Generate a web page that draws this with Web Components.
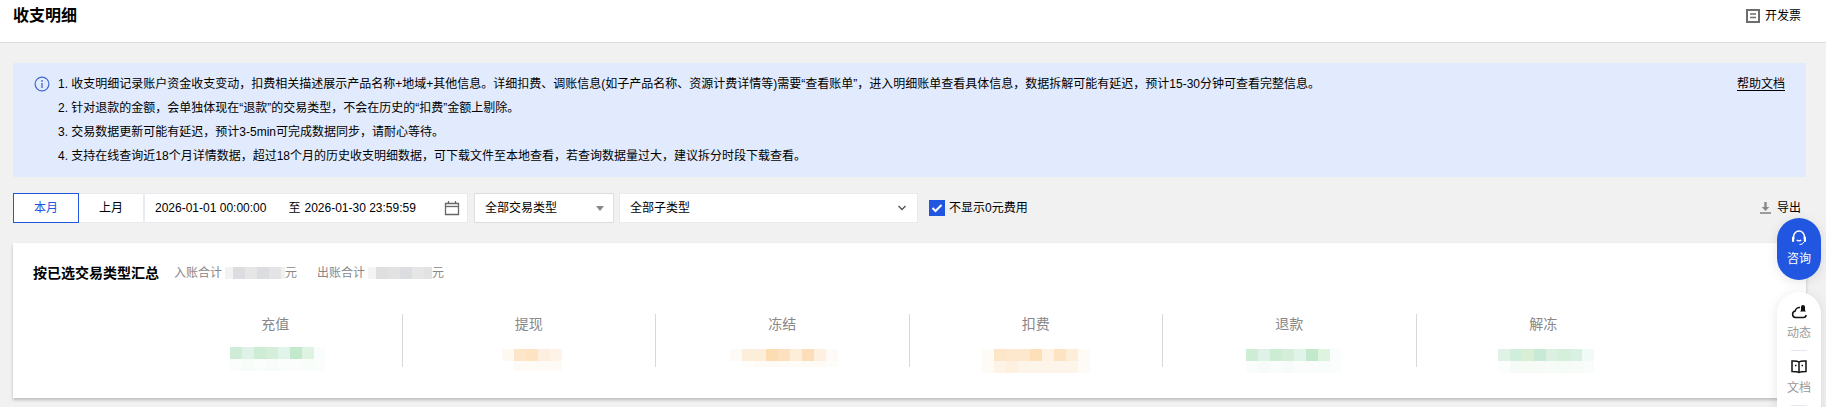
<!DOCTYPE html>
<html lang="zh-CN">
<head>
<meta charset="utf-8">
<title>收支明细</title>
<style>
html,body{margin:0;padding:0;background:#fff;overflow:hidden;height:407px}
body{font:12px/1.5 "Liberation Sans","Noto Sans CJK SC",sans-serif;color:#000}
</style>
</head>
<body>
<bill-page>
  <page-header slot="header" title="收支明细">开发票</page-header>
  <notice-box slot="notice" link="帮助文档">
    <div>1. 收支明细记录账户资金收支变动，扣费相关描述展示产品名称+地域+其他信息。详细扣费、调账信息(如子产品名称、资源计费详情等)需要“查看账单”，进入明细账单查看具体信息，数据拆解可能有延迟，预计15-30分钟可查看完整信息。</div>
    <div>2. 针对退款的金额，会单独体现在“退款”的交易类型，不会在历史的“扣费”金额上剔除。</div>
    <div>3. 交易数据更新可能有延迟，预计3-5min可完成数据同步，请耐心等待。</div>
    <div>4. 支持在线查询近18个月详情数据，超过18个月的历史收支明细数据，可下载文件至本地查看，若查询数据量过大，建议拆分时段下载查看。</div>
  </notice-box>
  <filter-bar slot="filters"></filter-bar>
  <summary-card slot="card">
    <stat-cell label="充值" shift="81" top="13" cells="#cfecd6 #dff2e8 #cdecd4 #d4eed9 #e0f4ea #c3e9cd #dff4e0 #f9fdfb|#fafdfb #f8fcf9 #fbfdfc #f8fcf9 #fafdfc #fafdfc #f9fdfa #fbfdfc"></stat-cell>
    <stat-cell label="提现" shift="99" top="15" cells="#fdf8f2 #fde6c8 #fde3c2 #fcefdf #fdf3e6|#ffffff #fefaf5 #fefaf5 #fefbf7 #fefaf4" h2="10"></stat-cell>
    <stat-cell label="冻结" shift="74" top="15" cells="#fefbf7 #fdeeda #fdeeda #fcdcb3 #fde1bf #fdeeda #fcdfba #fdf0e0 #fefaf5|#ffffff #fffdfb #fefbf7 #fefbf7 #fefbf8 #fefbf8 #fefbf7 #fefbf7 #fefcf9" h2="6"></stat-cell>
    <stat-cell label="扣费" shift="72" top="15" cells="#fefaf5 #fde6c8 #fde8ce #fde8ce #fde0b8 #fdf2e4 #fde3c2 #fdeeda #fefaf5|#fefaf5 #fdf3e6 #fdf0df #fdf5ea #fdf5ea #fdf5ea #fdf5ea #fdf5ea #fefaf5"></stat-cell>
    <stat-cell label="退款" shift="83" top="15" cells="#cfecd6 #dff2e8 #cdecd4 #d4eed9 #e0f4ea #c3e9cd #dff4e0 #f9fdfb|#fafdfb #f8fcf9 #fbfdfc #f8fcf9 #fafdfc #fafdfc #f9fdfa #fbfdfc"></stat-cell>
    <stat-cell label="解冻" shift="81" top="15" last cells="#dff2e6 #d0eedb #d8efd6 #c6ead6 #dcf0e2 #d5f0da #d9f1e3 #f1faf7|#fcfefd #f5fbf7 #f6fbf6 #f6fbf7 #f8fcf9 #f5fbf7 #f8fcf9 #f8fcfa"></stat-cell>
  </summary-card>
  <float-dock slot="dock"></float-dock>
</bill-page>
<script>
function shell(el, html){
  el.attachShadow({mode:"open"}).innerHTML = html;
}
customElements.define("bill-page", class extends HTMLElement{
  constructor(){super();shell(this,`<style>
    :host{display:block;position:relative;width:1826px;height:407px;background:#f1f1f1;overflow:hidden}
    main{display:flex;flex-direction:column;padding:20px 20px 0 13px}
  </style>
  <slot name="header"></slot>
  <main>
    <slot name="notice"></slot>
    <slot name="filters"></slot>
    <slot name="card"></slot>
  </main>
  <slot name="dock"></slot>`);}
});
customElements.define("page-header", class extends HTMLElement{
  constructor(){super();shell(this,`<style>
    :host{display:flex;align-items:center;justify-content:space-between;height:42px;background:#fff;border-bottom:1px solid #ddd;padding:0 25px 0 13px;color:#000}
    h1{margin:0;font-size:16px;font-weight:700;line-height:32px;padding-bottom:10px}
    .act{display:flex;align-items:center;gap:5px;font-size:12px;padding-bottom:10px}
    svg{display:block}
  </style>
  <h1>${this.getAttribute("title")}</h1>
  <div class="act"><svg width="14" height="14" viewBox="0 0 14 14"><rect x="1" y="1" width="12" height="12" fill="none" stroke="#6e6e6e" stroke-width="2"/><path d="M4 5h6M4 8.500h6" stroke="#6e6e6e" stroke-width="1.600"/></svg><slot></slot></div>`);}
});
customElements.define("notice-box", class extends HTMLElement{
  constructor(){super();shell(this,`<style>
    :host{display:flex;box-sizing:border-box;height:114px;padding:9px 21px;background:#e1ebfd;font-size:12px;line-height:24px;color:#000}
    svg{flex:none;display:block;margin:4px 8px 0 0}
    .txt{flex:1;min-width:0}
    a{color:#000;text-decoration:none;border-bottom:1px solid #000;height:13px;line-height:14px;margin-top:5px;flex:none}
  </style>
  <svg width="16" height="16" viewBox="0 0 16 16" fill="none"><circle cx="8" cy="8" r="6.900" stroke="#3f66cf" stroke-width="1.200"/><circle cx="8" cy="4.900" r=".9" fill="#3f66cf"/><path d="M8 7v5" stroke="#3f66cf" stroke-width="1.300"/></svg>
  <div class="txt"><slot></slot></div>
  <a href="#">${this.getAttribute("link")}</a>`);}
});
customElements.define("filter-bar", class extends HTMLElement{
  constructor(){super();shell(this,`<style>
    :host{display:flex;align-items:center;height:30px;margin-top:16px;font-size:12px;color:#000;width:1788px}
    .box{box-sizing:border-box;height:30px;background:#fff;border:1px solid #e7eaef;display:flex;align-items:center}
    .cur{width:66px;justify-content:center;border-color:#2156e0;color:#2156e0}
    .last{width:65px;justify-content:center;border-left:0}
    .date{width:324px;padding-left:10px;padding-right:7px}
    .date i{font-style:normal}
    .date .to{margin-left:22px;margin-right:4px}
    .date svg{margin-left:auto}
    .s1{width:140px;margin-left:6px;padding:0 9px 0 10px;border-color:#dedede;justify-content:space-between}
    .s2{width:299px;margin-left:5px;padding:0 11px 0 10px;justify-content:space-between}
    label{display:flex;align-items:center;gap:4px;margin-left:11px}
    .chk{width:16px;height:16px;background:#2156e0;display:block}
    .exp{margin-left:auto;display:flex;align-items:center;gap:6px}
    svg{display:block;flex:none}
  </style>
  <div class="box cur">本月</div>
  <div class="box last">上月</div>
  <div class="box date"><i>2026-01-01 00:00:00</i><i class="to">至</i><i>2026-01-30 23:59:59</i>
    <svg width="16" height="16" viewBox="0 0 16 16" fill="none"><path d="M1.500 3.500h13v11h-13z" stroke="#666" stroke-width="1.300"/><path d="M1.500 6.500h13" stroke="#666" stroke-width="1.300"/><path d="M4.500 1v3M11.500 1v3" stroke="#666" stroke-width="1.300"/></svg></div>
  <div class="box s1"><span>全部交易类型</span><svg width="8" height="5" viewBox="0 0 8 5"><path d="M0 0h8L4 5z" fill="#888"/></svg></div>
  <div class="box s2"><span>全部子类型</span><svg width="8" height="6" viewBox="0 0 8 6" fill="none"><path d="M.5 1l3.500 3.500L7.500 1" stroke="#555" stroke-width="1.400"/></svg></div>
  <label><svg class="chk" viewBox="0 0 16 16"><path d="M3.500 8l3 3 6-6" fill="none" stroke="#fff" stroke-width="2"/></svg>不显示0元费用</label>
  <div class="exp"><svg width="11" height="12" viewBox="0 0 11 12"><path d="M4.300 0h2.400v5h2.600L5.500 9 1.700 5h2.600z" fill="#888"/><path d="M0 11h11" stroke="#888" stroke-width="1.600"/></svg>导出</div>`);}
});
customElements.define("blur-strip", class extends HTMLElement{
  constructor(){super();
    const rows=(this.getAttribute("cells")||"").split("|");
    const w=+(this.getAttribute("w")||12), h1=+(this.getAttribute("h1")||12), h2=+(this.getAttribute("h2")||12);
    const widths=(this.getAttribute("widths")||"").split(" ").filter(Boolean);
    const html=rows.map((r,ri)=>`<div class="r" style="height:${ri?h2:h1}px">`+r.split(" ").map((c,i)=>`<b style="background:${c};width:${widths[i]||w}px"></b>`).join("")+`</div>`).join("");
    shell(this,`<style>:host{display:inline-block;vertical-align:top}.r{display:flex}b{display:block;flex:none}</style>${html}`);
  }
});
customElements.define("summary-card", class extends HTMLElement{
  constructor(){super();shell(this,`<style>
    :host{display:block;box-sizing:border-box;height:155px;margin-top:20px;width:1793px;background:#fff;box-shadow:0 2px 3px rgba(0,0,0,.22);padding:20px 20px 0;color:#000}
    .top{display:flex;align-items:center;height:20px;font-size:12px;color:#888}
    h2{margin:0 15px 0 0;font-size:14px;font-weight:700;color:#000;line-height:20px}
    .m{display:flex;align-items:center;margin-right:20px}
    .m blur-strip{margin:0 0 0 3px}
    .stats{display:flex;justify-content:center;margin-top:31px}
  </style>
  <div class="top"><h2>按已选交易类型汇总</h2>
    <div class="m">入账合计<blur-strip h1="12" widths="8 12 12 12 12 4" cells="#f2f2f2 #dcdde0 #e6e6e6 #dcdde0 #e4e4e6 #f0f0f0"></blur-strip>元</div>
    <div class="m">出账合计<blur-strip h1="12" widths="8 12 12 12 12 8" cells="#f4f4f4 #dfdfe1 #e2e2e2 #dcdde0 #e6e6e6 #e2e2e4"></blur-strip>元</div>
  </div>
  <div class="stats"><slot></slot></div>`);}
});
customElements.define("stat-cell", class extends HTMLElement{
  constructor(){super();
    const last=this.hasAttribute("last");
    shell(this,`<style>
    :host{display:block;box-sizing:border-box;width:253.5px;height:53px;flex:none;${last?"":"border-right:1px solid #d8d8d8;"}}
    .l{font-size:14px;line-height:20px;color:#888;text-align:center}
    blur-strip{display:block;margin-left:${this.getAttribute("shift")}px;margin-top:${this.getAttribute("top")}px}
  </style>
  <div class="l">${this.getAttribute("label")}</div>
  <blur-strip cells="${this.getAttribute("cells")}" h2="${this.getAttribute("h2")||12}"></blur-strip>`);}
});
customElements.define("float-dock", class extends HTMLElement{
  constructor(){super();shell(this,`<style>
    :host{position:absolute;left:1777px;top:218px;width:44px;display:block;font-size:12px;text-align:center}
    .p{box-sizing:border-box;width:44px;box-shadow:0 2px 12px rgba(0,0,0,.1)}
    .a{height:62px;border-radius:22px;background:#2156e0;color:#fff;padding-top:12px}
    .b{margin-top:12px;height:140px;background:#fff;border-radius:22px 22px 0 0;color:#999;padding-top:12px}
    svg{display:block;margin:0 auto}
    .t{line-height:18px;margin-top:4px}
    hr{border:0;height:1px;background:#e6e6ee;width:16px;margin:8px auto}
  </style>
  <div class="p a">
    <svg width="16" height="16" viewBox="0 0 16 16" fill="none"><path d="M2.600 9V6.500a5.400 5.400 0 0 1 10.800 0V9" stroke="#fff" stroke-width="1.500"/><rect x="1" y="6.500" width="2.200" height="5.500" rx="1" fill="#fff"/><rect x="12.800" y="6.500" width="2.200" height="5.500" rx="1" fill="#fff"/><path d="M5.800 9.800c1 1.300 3.400 1.300 4.400 0" stroke="#fff" stroke-width="1.300"/><path d="M12.800 12c-.6 1.800-2.200 2.500-4.300 2.500" stroke="#fff" stroke-width="1"/></svg>
    <div class="t">咨询</div>
  </div>
  <div class="p b">
    <svg width="16" height="16" viewBox="0 0 16 16" fill="none"><path d="M9 3.600A4.300 4.300 0 0 0 4.200 7 3.300 3.300 0 0 0 4.500 13.500h8a2.600 2.600 0 0 0 2.500-2.600" stroke="#111" stroke-width="1.500"/><path d="M12 1a2 2 0 0 1 2 2v3.200l1 1.200H9l1-1.200V3a2 2 0 0 1 2-2z" fill="#111"/></svg>
    <div class="t">动态</div>
    <hr>
    <svg width="16" height="16" viewBox="0 0 16 16" fill="none"><path d="M8 3C6.500 1.900 3.500 1.900 1 2v10.500c2.500 0 5.500 0 7 1 1.500-1 4.500-1 7-1V2c-2.500-.1-5.500-.1-7 1zM8 3v11" stroke="#111" stroke-width="1.500"/><path d="M4 6.500h1.500M10.500 6.500H12" stroke="#111" stroke-width="1.600"/></svg>
    <div class="t">文档</div>
    <hr>
  </div>`);}
});
</script>
</body>
</html>
